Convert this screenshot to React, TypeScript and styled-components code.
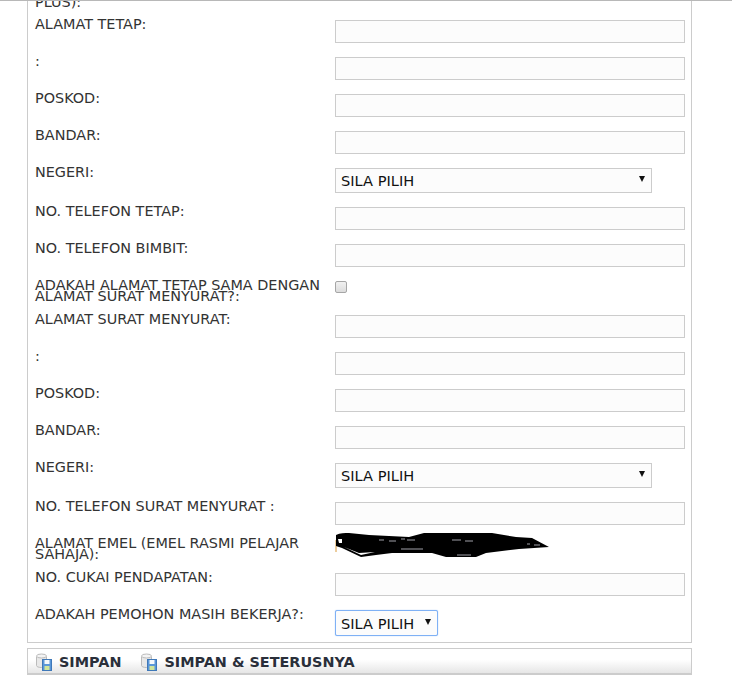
import styled, { createGlobalStyle } from 'styled-components';

const GlobalStyle = createGlobalStyle`
  html, body {
    margin: 0;
    padding: 0;
    background: #fff;
    overflow: hidden;
  }
`;

const Viewport = styled.div`
  height: 683px;
  overflow: hidden;
  border-top: 1px solid #b8b8b8;
  box-sizing: border-box;
  font-family: 'DejaVu Sans', Verdana, sans-serif;
`;

const Wrapper = styled.div`
  width: 665px;
  margin-left: 27px;
`;

const Panel = styled.div`
  display: flex;
  flex-direction: column;
  gap: 14px;
  height: 642px;
  box-sizing: border-box;
  padding: 0 6px 6px 7px;
  border: 1px solid #ccc;
  border-top: none;
`;

const ClippedLabel = styled.div`
  display: flex;
  align-items: flex-end;
  height: 7px;
  margin-bottom: -2px;
  font-size: 14.4px;
  line-height: 11px;
  color: #333;
`;

const Row = styled.div`
  display: flex;
  align-items: flex-start;
`;

const Label = styled.label`
  flex: none;
  width: 300px;
  box-sizing: border-box;
  padding-right: 8px;
  margin-top: -1px;
  margin-bottom: -1px;
  font-size: 14.4px;
  line-height: 11px;
  color: #333;
`;

const TextInput = styled.div`
  width: 350px;
  height: 23px;
  box-sizing: border-box;
  border: 1px solid #ccc;
  background: #fcfcfc;
`;

const Select = styled.div<{ $width: number; $focused?: boolean }>`
  display: flex;
  align-items: center;
  justify-content: space-between;
  width: ${(p) => p.$width}px;
  height: ${(p) => (p.$focused ? 26 : 25)}px;
  box-sizing: border-box;
  padding: 0 6px 0 5px;
  border: 1px solid ${(p) => (p.$focused ? '#7fb1f5' : '#ccc')};
  border-radius: ${(p) => (p.$focused ? 2 : 0)}px;
  box-shadow: ${(p) => (p.$focused ? '0 0 1px #7fb1f5' : 'none')};
  background: #fcfcfc;
  font-size: 14.6px;
  color: #111;
`;

const Arrow = styled.span`
  width: 0;
  height: 0;
  margin-top: -3px;
  border-left: 3.5px solid transparent;
  border-right: 3.5px solid transparent;
  border-top: 6px solid #111;
`;

const Checkbox = styled.span`
  display: block;
  width: 12px;
  height: 12px;
  box-sizing: border-box;
  border: 1px solid #a6a6a6;
  border-radius: 2px;
  background: linear-gradient(#f1f1f1, #dcdcdc);
`;

const CheckboxCell = styled.div`
  height: 20px;
`;

const EmailCell = styled.div`
  position: relative;
  height: 20px;
`;

const Scribble = styled.svg`
  position: absolute;
  left: 0;
  top: -9px;
`;

const Toolbar = styled.div`
  display: flex;
  align-items: center;
  gap: 20px;
  height: 27px;
  margin-top: 5px;
  padding-left: 8px;
  box-sizing: border-box;
  border: 1px solid #ccc;
  border-bottom-width: 2px;
  background: linear-gradient(#fff 45%, #e6e6e6);
`;

const ToolButton = styled.div`
  display: flex;
  align-items: center;
  gap: 7px;
  font-size: 14.4px;
  line-height: 17px;
  padding-top: 2px;
  font-weight: bold;
  color: #2a2f3a;
`;

function SaveIcon() {
  return (
    <svg width="16" height="18" viewBox="0 0 16 18">
      <path
        d="M.5 3.5v9c0 1.2 2 2 5 2s5-.8 5-2v-9"
        fill="#e8e8e8"
        stroke="#bbb"
      />
      <ellipse cx="5.5" cy="3" rx="5" ry="2" fill="#f4f4f4" stroke="#bbb" />
      <rect x="6.5" y="6.5" width="9" height="11" fill="#5a97d8" stroke="#3f78b8" />
      <rect x="8.5" y="7" width="5" height="4" fill="#f4f8fc" />
      <rect x="8.5" y="13" width="5" height="4" fill="#cfe49a" />
    </svg>
  );
}

const upperFields = ['ALAMAT TETAP:', ':', 'POSKOD:', 'BANDAR:'];
const lowerFields = ['ALAMAT SURAT MENYURAT:', ':', 'POSKOD:', 'BANDAR:'];

export default function App() {
  return (
    <>
      <GlobalStyle />
      <Viewport>
        <Wrapper>
          <Panel>
            <ClippedLabel>PLUS):</ClippedLabel>
            {upperFields.map((f, i) => (
              <Row key={i}>
                <Label>{f}</Label>
                <TextInput />
              </Row>
            ))}
            <Row>
              <Label>NEGERI:</Label>
              <Select $width={317}>
                SILA PILIH
                <Arrow />
              </Select>
            </Row>
            <Row>
              <Label>NO. TELEFON TETAP:</Label>
              <TextInput />
            </Row>
            <Row>
              <Label>NO. TELEFON BIMBIT:</Label>
              <TextInput />
            </Row>
            <Row>
              <Label>ADAKAH ALAMAT TETAP SAMA DENGAN ALAMAT SURAT MENYURAT?:</Label>
              <CheckboxCell>
                <Checkbox />
              </CheckboxCell>
            </Row>
            {lowerFields.map((f, i) => (
              <Row key={i}>
                <Label>{f}</Label>
                <TextInput />
              </Row>
            ))}
            <Row>
              <Label>NEGERI:</Label>
              <Select $width={317}>
                SILA PILIH
                <Arrow />
              </Select>
            </Row>
            <Row>
              <Label>NO. TELEFON SURAT MENYURAT :</Label>
              <TextInput />
            </Row>
            <Row>
              <Label>ALAMAT EMEL (EMEL RASMI PELAJAR SAHAJA):</Label>
              <EmailCell>
                <Scribble width="220" height="32" viewBox="0 0 220 32">
                  <path d="M1 10V22" stroke="#d99a3a" strokeWidth="1" />
                  <path
                    d="M1 5 C5 3 10 3 14 3 L34 5 L74 7 L89 3 L157 3 L181 7 L197 8 L214 17 L184 19 L151 23 L141 27 L111 27 L97 23 L57 23 L41 25 L26 27 L7 18 L1 16 Z"
                    fill="#000"
                  />
                  <path
                    d="M44 10h5M54 11h7M66 9h4M72 10h8M66 19h22M117 10h9M130 11h8M122 25h14M192 14h3M199 15h6"
                    stroke="#c9c9d4"
                    strokeWidth="1"
                    opacity="0.8"
                  />
                  <path d="M3 9h4v4h-3z" fill="#fff" />
                  <path d="M9 17 L24 23 L40 22 L26 25 Z" fill="#fff" />
                </Scribble>
              </EmailCell>
            </Row>
            <Row>
              <Label>NO. CUKAI PENDAPATAN:</Label>
              <TextInput />
            </Row>
            <Row>
              <Label>ADAKAH PEMOHON MASIH BEKERJA?:</Label>
              <Select $width={103} $focused>
                SILA PILIH
                <Arrow />
              </Select>
            </Row>
          </Panel>
          <Toolbar>
            <ToolButton>
              <SaveIcon />
              SIMPAN
            </ToolButton>
            <ToolButton>
              <SaveIcon />
              SIMPAN &amp; SETERUSNYA
            </ToolButton>
          </Toolbar>
        </Wrapper>
      </Viewport>
    </>
  );
}
